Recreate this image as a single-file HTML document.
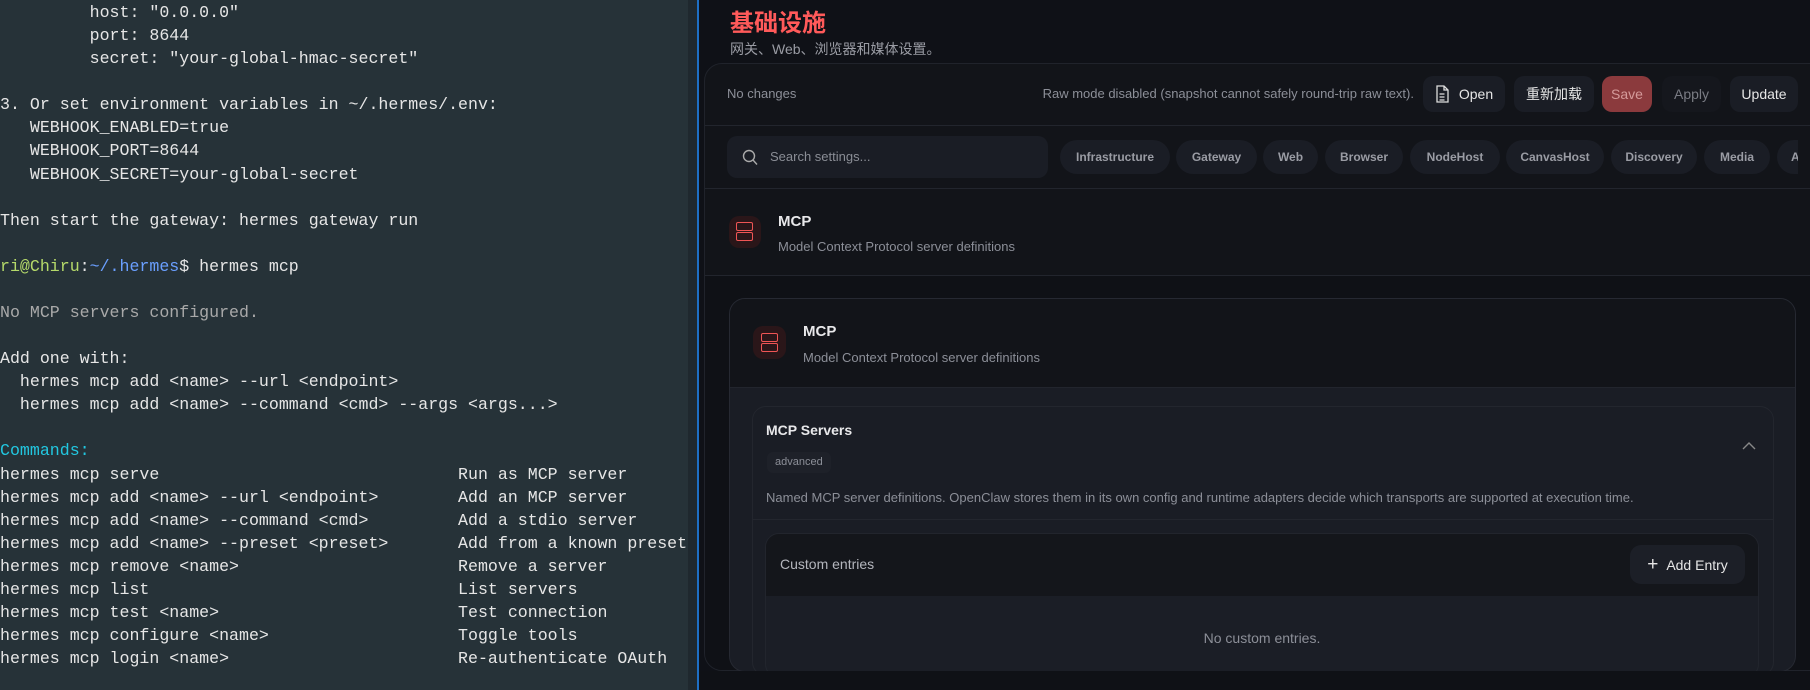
<!DOCTYPE html>
<html><head><meta charset="utf-8"><style>
*{margin:0;padding:0;box-sizing:border-box}
body{width:1810px;height:690px;overflow:hidden;background:#0f1117;position:relative;font-family:"Liberation Sans","Noto Sans CJK SC",sans-serif}
.term{position:absolute;left:0;top:0;width:698px;height:690px;background:#263238;overflow:hidden}
.term .sb{position:absolute;right:0;top:0;width:10px;height:690px;background:#1f282e}
.term pre{position:absolute;left:0;top:1px;font-family:"Liberation Mono",monospace;font-size:16.6px;line-height:23.08px;color:#e6e6e6;white-space:pre}
.g{color:#a9a9a9}.gr{color:#b5d96a}.bl{color:#6a9fff}.cy{color:#22c7e0}
.vline{position:absolute;left:697px;top:0;width:2px;height:690px;background:#1e6fc4}
.a{position:absolute}
.t{color:#e8e8ea}
.m{color:#8c8f98}
.btn{position:absolute;top:76px;height:36px;border-radius:10px;background:#1a1d25;color:#e6e6e6;font-size:14px;display:flex;align-items:center;justify-content:center}
.chip{position:absolute;top:140px;height:34px;border-radius:17px;background:#1a1d25;color:#9a9ca4;font-size:12px;font-weight:bold;display:flex;align-items:center;justify-content:center}
.icon{position:absolute;border-radius:10px;background:#2a1619}
.icon i{position:absolute;left:8px;width:17px;height:9px;border:1.6px solid #ef5555;border-radius:2px}
</style></head><body>
<div class="term"><div class="sb"></div><pre>         host: "0.0.0.0"
         port: 8644
         secret: "your-global-hmac-secret"

3. Or set environment variables in ~/.hermes/.env:
   WEBHOOK_ENABLED=true
   WEBHOOK_PORT=8644
   WEBHOOK_SECRET=your-global-secret

Then start the gateway: hermes gateway run

<span class="gr">ri@Chiru</span>:<span class="bl">~/.hermes</span>$ hermes mcp

<span class="g">No MCP servers configured.</span>

Add one with:
  hermes mcp add &lt;name&gt; --url &lt;endpoint&gt;
  hermes mcp add &lt;name&gt; --command &lt;cmd&gt; --args &lt;args...&gt;

<span class="cy">Commands:</span>
hermes mcp serve                              Run as MCP server
hermes mcp add &lt;name&gt; --url &lt;endpoint&gt;        Add an MCP server
hermes mcp add &lt;name&gt; --command &lt;cmd&gt;         Add a stdio server
hermes mcp add &lt;name&gt; --preset &lt;preset&gt;       Add from a known preset
hermes mcp remove &lt;name&gt;                      Remove a server
hermes mcp list                               List servers
hermes mcp test &lt;name&gt;                        Test connection
hermes mcp configure &lt;name&gt;                   Toggle tools
hermes mcp login &lt;name&gt;                       Re-authenticate OAuth</pre></div>
<div class="vline"></div>

<div class="a" style="left:730px;top:3px;font-size:24px;font-weight:bold;color:#ff5a5a">基础设施</div>
<div class="a" style="left:730px;top:39px;font-size:14px;color:#9a9ca4">网关、Web、浏览器和媒体设置。</div>

<div class="a" style="left:704px;top:63px;width:1130px;height:608px;border:1px solid #20232b;border-radius:18px;background:#121419;overflow:hidden">
  <div class="a" style="left:0;top:61px;width:100%;height:1px;background:#22252d"></div>
  <div class="a" style="left:0;top:124px;width:100%;height:1px;background:#22252d"></div>
  <div class="a" style="left:0;top:211px;width:100%;height:1px;background:#22252d"></div>
  <div class="a" style="left:0;top:212px;width:100%;height:400px;background:#0f1116"></div>
</div>
<div class="a m" style="left:727px;top:86px;font-size:13px">No changes</div>
<div class="a m" style="left:1000px;top:86px;font-size:13px;width:414px;text-align:right">Raw mode disabled (snapshot cannot safely round-trip raw text).</div>
<div class="btn" style="left:1423px;width:82px"><svg width="14" height="18" viewBox="0 0 14 18" style="margin-right:10px"><path d="M2 1h7l4 4v12H2z M9 1v4h4 M4.5 9h5 M4.5 12h5 M4.5 15h5" fill="none" stroke="#ddd" stroke-width="1.3"/></svg>Open</div>
<div class="btn" style="left:1514px;width:80px">重新加载</div>
<div class="btn" style="left:1602px;width:50px;background:#8b3a3d;color:#d49a9a">Save</div>
<div class="btn" style="left:1662px;width:59px;background:#15171d;color:#7a7c84">Apply</div>
<div class="btn" style="left:1730px;width:68px">Update</div>

<div class="a" style="left:727px;top:136px;width:321px;height:42px;border-radius:10px;background:#1a1d25"></div>
<svg class="a" style="left:742px;top:149px" width="16" height="17" viewBox="0 0 16 17"><circle cx="7" cy="7" r="5.5" fill="none" stroke="#aaa" stroke-width="1.4"/><path d="M11 11l4 4.5" stroke="#aaa" stroke-width="1.4"/></svg>
<div class="a m" style="left:770px;top:149px;font-size:13px;color:#8a8d95">Search settings...</div>
<div class="chip" style="left:1060px;width:110px">Infrastructure</div>
<div class="chip" style="left:1176px;width:81px">Gateway</div>
<div class="chip" style="left:1263px;width:55px">Web</div>
<div class="chip" style="left:1325px;width:78px">Browser</div>
<div class="chip" style="left:1410px;width:90px">NodeHost</div>
<div class="chip" style="left:1506px;width:98px">CanvasHost</div>
<div class="chip" style="left:1611px;width:86px">Discovery</div>
<div class="chip" style="left:1704px;width:66px">Media</div>
<div class="chip" style="left:1777px;width:60px;justify-content:flex-start;padding-left:14px">A</div>
<div class="a" style="left:1798px;top:130px;width:12px;height:50px;background:#121419"></div>

<div class="icon" style="left:729px;top:216px;width:32px;height:32px"><i style="left:7px;top:6px"></i><i style="left:7px;top:16px"></i></div>
<div class="a t" style="left:778px;top:213px;font-size:15px;font-weight:bold">MCP</div>
<div class="a m" style="left:778px;top:239px;font-size:13px">Model Context Protocol server definitions</div>

<div class="a" style="left:729px;top:298px;width:1067px;height:374px;border:1px solid #262932;border-radius:16px;background:#1a1d25;overflow:hidden">
  <div class="a" style="left:0;top:0;width:100%;height:89px;background:#121419;border-bottom:1px solid #22252d"></div>
</div>
<div class="icon" style="left:753px;top:326px;width:33px;height:33px"><i style="left:8px;top:7px"></i><i style="left:8px;top:17px"></i></div>
<div class="a t" style="left:803px;top:323px;font-size:15px;font-weight:bold">MCP</div>
<div class="a m" style="left:803px;top:350px;font-size:13px">Model Context Protocol server definitions</div>

<div class="a" style="left:752px;top:406px;width:1022px;height:270px;border:1px solid #23262e;border-radius:14px;background:#1a1d25"></div>
<div class="a" style="left:752px;top:519px;width:1022px;height:1px;background:#23262e"></div>
<div class="a t" style="left:766px;top:422px;font-size:14px;font-weight:bold">MCP Servers</div>
<div class="a" style="left:767px;top:452px;height:21px;padding:0 8px;border-radius:6px;background:#1e2129;color:#8c8f98;font-size:11px;line-height:21px">advanced</div>
<svg class="a" style="left:1742px;top:441px" width="14" height="10" viewBox="0 0 14 10"><path d="M1 8l6-6 6 6" fill="none" stroke="#888" stroke-width="1.4"/></svg>
<div class="a m" style="left:766px;top:490px;font-size:13px">Named MCP server definitions. OpenClaw stores them in its own config and runtime adapters decide which transports are supported at execution time.</div>

<div class="a" style="left:765px;top:533px;width:994px;height:145px;border:1px solid #22252d;border-radius:14px;background:#1b1e26;overflow:hidden">
  <div class="a" style="left:0;top:0;width:100%;height:62px;background:#14161b"></div>
</div>
<div class="a" style="left:780px;top:556px;font-size:14px;color:#b4b6bd">Custom entries</div>
<div class="a" style="left:1630px;top:545px;width:115px;height:39px;border-radius:11px;background:#1c1f27;color:#e6e6e6;font-size:14px;display:flex;align-items:center;justify-content:center"><span style="font-size:19px;margin-right:8px;font-weight:300">+</span>Add Entry</div>
<div class="a m" style="left:765px;top:630px;width:994px;text-align:center;font-size:14px">No custom entries.</div>

<div class="a" style="left:699px;top:671px;width:1111px;height:19px;background:#0f1116"></div>
</body></html>
